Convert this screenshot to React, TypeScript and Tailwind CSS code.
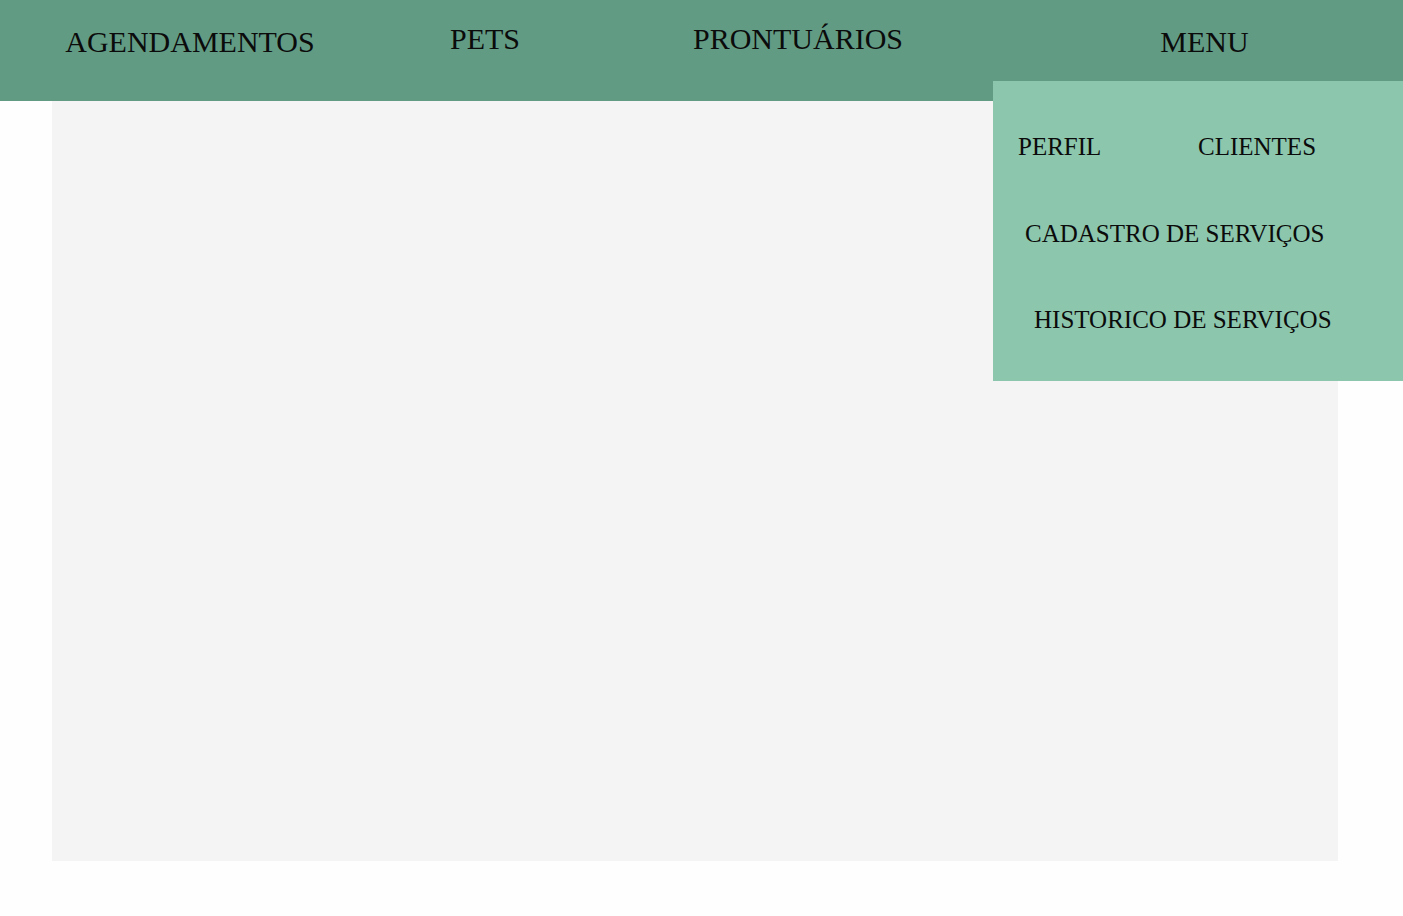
import React from 'react';

const serif = "font-['Liberation_Serif','Times_New_Roman',serif]";

const navItems = [
  { label: 'AGENDAMENTOS', box: 'w-[380px] pt-[25px]' },
  { label: 'PETS', box: 'w-[210px] pt-[22px]' },
  { label: 'PRONTUÁRIOS', box: 'w-[416px] pt-[22px]' },
  { label: 'MENU', box: 'w-[397px] pt-[25px]' },
];

const MenuDropdown: React.FC = () => {
  return (
    <div className="absolute left-[993px] top-[81px] w-[410px] h-[300px] bg-[#8cc6ad] text-[25px] leading-[28px] text-[#0b0b0b]">
      {/* Row 1 */}
      <div className="flex pt-[52px]">
        <span className="ml-[25px] w-[180px]">PERFIL</span>
        <span>CLIENTES</span>
      </div>
      {/* Row 2 */}
      <div className="pt-[59px] pl-[32px]">CADASTRO DE SERVIÇOS</div>
      {/* Row 3 */}
      <div className="pt-[58px] pl-[41px]">HISTORICO DE SERVIÇOS</div>
    </div>
  );
};

export default function App() {
  return (
    <div className={`w-[1403px] h-[916px] bg-[#fefefe] ${serif}`}>
      {/* Header */}
      <header className="relative h-[101px] bg-[#629b84] flex text-[#0b0b0b]">
        {navItems.map((item) => (
          <div key={item.label} className={`${item.box} text-center text-[30px] leading-[34px]`}>
            {item.label}
          </div>
        ))}
        <MenuDropdown />
      </header>

      {/* Content panel */}
      <main className="ml-[52px] w-[1286px] h-[760px] bg-[#f4f4f4]" />
    </div>
  );
}
